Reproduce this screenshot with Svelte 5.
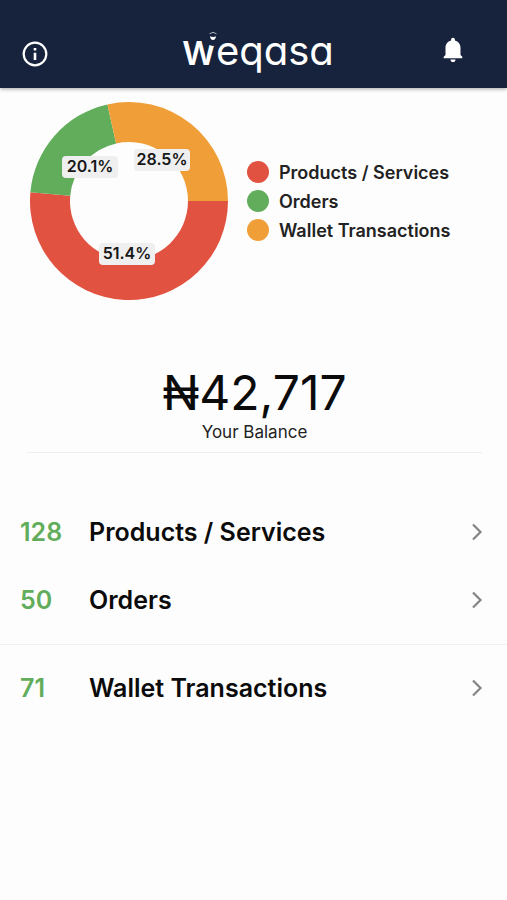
<script>
  const slices = [
    { name: 'Products / Services', share: 51.4, color: '#e25241', x: 97, y: 153 },
    { name: 'Orders', share: 20.1, color: '#62ad5b', x: 60, y: 66 },
    { name: 'Wallet Transactions', share: 28.5, color: '#f09f38', x: 132, y: 59 },
  ];

  const center = 99;
  const outer = 99;
  const inner = 59;

  function point(radius, turn) {
    const angle = turn * 2 * Math.PI;
    return `${center + radius * Math.cos(angle)} ${center + radius * Math.sin(angle)}`;
  }

  function ring(from, to) {
    const large = to - from > 0.5 ? 1 : 0;
    return `M${point(outer, from)} A${outer} ${outer} 0 ${large} 1 ${point(outer, to)} L${point(inner, to)} A${inner} ${inner} 0 ${large} 0 ${point(inner, from)}Z`;
  }

  let turn = 0;
  const arcs = slices.map((slice) => {
    const start = turn;
    turn += slice.share / 100;
    return { ...slice, path: ring(start, turn) };
  });

  const groups = [
    [
      { count: 128, label: 'Products / Services' },
      { count: 50, label: 'Orders' },
    ],
    [{ count: 71, label: 'Wallet Transactions' }],
  ];
</script>

<div class="app">
  <header>
    <button class="icon" aria-label="Information">
      <svg width="26" height="26" viewBox="0 0 26 26" fill="none" stroke="#fff">
        <circle cx="13" cy="13" r="11.3" stroke-width="2.2" />
        <path d="M13 11.7v7.2M13 7v2.6" stroke-width="2.6" />
      </svg>
    </button>
    <h1>
      <span class="initial">W</span><span class="rest">eqasa</span>
      <svg class="face" width="14" height="16" viewBox="0 0 14 16" aria-hidden="true">
        <circle cx="7" cy="9" r="6" fill="#17233d" />
        <path d="M3.500 2.800Q7-.2 10.500 2.800" fill="none" stroke="#aab1c0" stroke-width="1" />
        <path d="M4 5.300Q7 6.500 10 5.300Q9.600 9 7 9Q4.400 9 4 5.300Z" fill="#fff" />
      </svg>
    </h1>
    <button class="icon bell" aria-label="Notifications">
      <svg width="20" height="26" viewBox="0 0 20 26" fill="#fff">
        <path d="M10 .8c1.2 0 1.9.8 1.9 1.9v.7c3.600.9 5.600 3.700 5.600 7.300v7.400l1.800 1.600v1.600H.7v-1.600L2.500 18.100v-7.400c0-3.600 2-6.400 5.600-7.300v-.7C8.100 1.600 8.800.8 10 .8Z" />
        <path d="M7.500 22.400h5c0 1.600-1 2.700-2.500 2.700s-2.500-1.100-2.500-2.700Z" />
      </svg>
    </button>
  </header>

  <main>
    <section class="summary">
      <svg class="chart" width="198" height="198" viewBox="0 0 198 198" role="img" aria-label="Share of activity">
        {#each arcs as arc}
          <path d={arc.path} fill={arc.color} />
        {/each}
        {#each arcs as arc}
          <rect x={arc.x - 28} y={arc.y - 12} width="56" height="22" rx="4" fill="#efefef" />
          <text x={arc.x} y={arc.y + 4} text-anchor="middle">{arc.share}%</text>
        {/each}
      </svg>
      <ul class="legend">
        {#each slices as slice}
          <li><span class="dot" style="background: {slice.color}"></span>{slice.name}</li>
        {/each}
      </ul>
    </section>

    <section class="balance">
      <p class="amount">₦42,717</p>
      <p class="caption">Your Balance</p>
    </section>

    <nav>
      {#each groups as group}
        <div class="group">
          {#each group as item}
            <a href="#details">
              <span class="count">{item.count}</span>
              <span class="label">{item.label}</span>
              <svg width="12" height="18" viewBox="0 0 12 18" fill="none" stroke="#858585" stroke-width="2.2">
                <path d="M2 1.5 9.5 9 2 16.5" />
              </svg>
            </a>
          {/each}
        </div>
      {/each}
    </nav>
  </main>
</div>

<style>
  :global(body) {
    margin: 0;
    background: #fdfdfd;
  }

  .app {
    min-height: 100vh;
    background: #fdfdfd;
    color: #0b0b0b;
    font-family: Inter, 'Liberation Sans', sans-serif;
  }

  header {
    display: flex;
    justify-content: space-between;
    align-items: center;
    height: 88px;
    padding: 20px 42px 0 20px;
    box-sizing: border-box;
    background: #17233d;
    box-shadow: 0 1px 4px rgba(0, 0, 0, 0.35);
  }

  .icon {
    display: flex;
    padding: 2px;
    border: 0;
    background: none;
  }

  .bell {
    padding-bottom: 10px;
  }

  h1 {
    position: relative;
    margin: 0 0 0 25px;
    padding-bottom: 4px;
    color: #fff;
    font-size: 40px;
    line-height: 40px;
    font-weight: 400;
    font-feature-settings: 'cv11' 1;
  }

  .initial {
    font-size: 33px;
    font-weight: 600;
  }

  .face {
    position: absolute;
    top: 0;
    left: 24px;
  }

  .summary {
    display: flex;
    align-items: center;
    gap: 19px;
    padding: 14px 20px 0 30px;
  }

  .chart {
    flex: none;
  }

  .chart text {
    fill: #161616;
    font-size: 16px;
    font-weight: 600;
  }

  .legend {
    margin: 0;
    padding: 0;
    list-style: none;
    color: #222;
    font-size: 18px;
    line-height: 29px;
    font-weight: 600;
    white-space: nowrap;
  }

  .legend li {
    display: flex;
    align-items: center;
    gap: 10px;
  }

  .dot {
    width: 22px;
    height: 22px;
    border-radius: 50%;
  }

  .balance {
    margin: 65px 25px 0 27px;
    padding-bottom: 9px;
    border-bottom: 1px solid #eee;
    text-align: center;
  }

  p {
    margin: 0;
  }

  .amount {
    font-size: 48px;
    line-height: 56px;
  }

  .caption {
    color: #222;
    font-size: 17px;
    line-height: 22px;
  }

  nav {
    padding-top: 45px;
  }

  .group {
    padding-bottom: 10px;
  }

  .group + .group {
    padding-top: 9px;
    border-top: 1px solid #f1f1f1;
  }

  a {
    display: flex;
    align-items: center;
    height: 68px;
    padding: 0 24px 0 20px;
    color: #0b0b0b;
    font-size: 25px;
    font-weight: 600;
    text-decoration: none;
  }

  .count {
    width: 69px;
    color: #62ad5b;
  }

  .label {
    flex: 1;
  }
</style>
